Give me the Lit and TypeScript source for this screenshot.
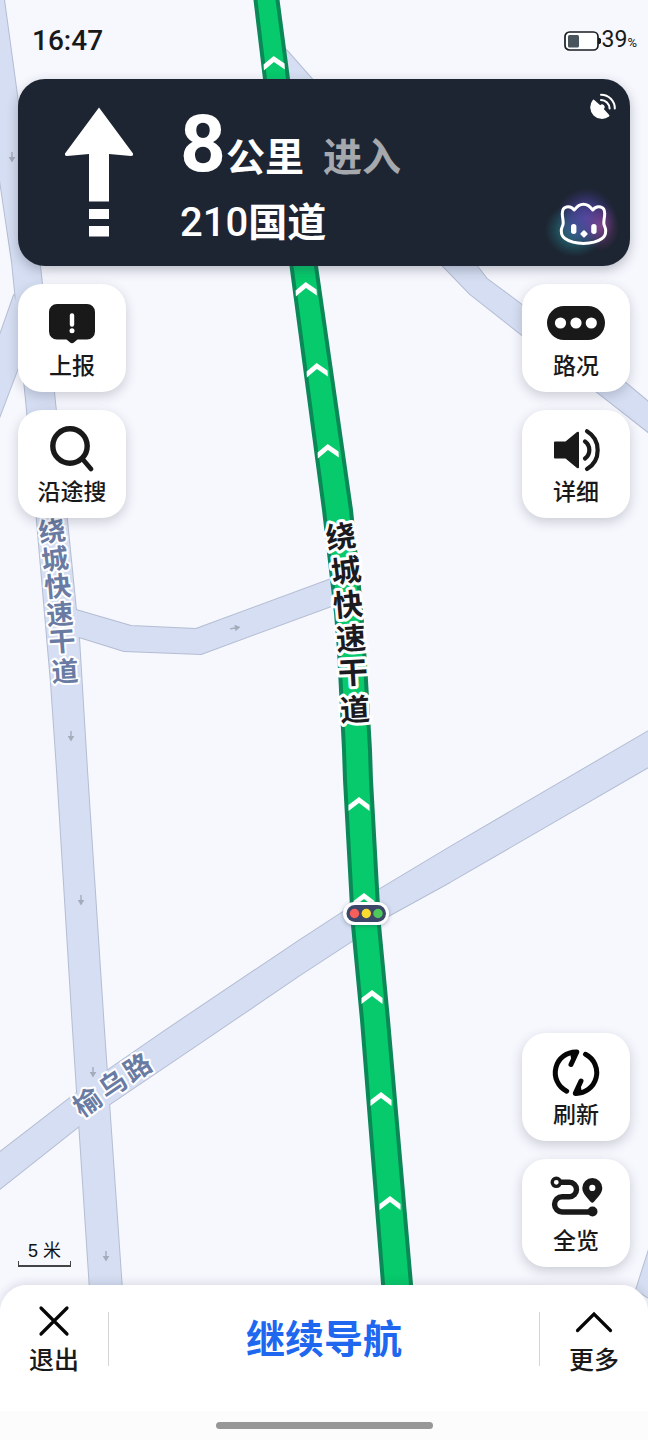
import { LitElement, html, svg, css } from "lit";
import { customElement, property } from "lit/decorators.js";

type Glyph = [char: string, x: number, y: number, angle: number];

const ROADS = [
  "M-6 -4 L3.500 -4 L17 95 L40 266 L54 392 L66 510 L76 610 L79 638 L87 770 L104 1030 L122 1290 L90 1290 L73 1030 L57 770 L51 683 L36 510 L26 400 L12 262 L-6 140 Z",
  "M14 295 L-4 346 L-4 426 L18 368 L30 340 Z",
  "M70 608 L76 610 L131 626 L196 629 L345 574 L345 601 L201 654 L124 651 L79 637 L70 635 Z",
  "M-4 1155 L70 1098 L108 1070 L166 1030 L300 940 L343 912 L380 889 L450 847 L652 729 L652 765 L450 882 L390 915 L352 941 L300 975 L200 1043 L110 1104 L78 1127 L-4 1192 Z",
  "M270 34 L288 52 L311 78 L477 266 L487 279 L522 305 L627 384 L652 405 L652 435 L597 392 L522 335 L470 294 L443 266 L262 60 Z",
  "M652 1240 L636 1290 L652 1300 Z",
];

const ROUTE =
  "M255 -4 L265 79 L291.500 266 L324 510 L336 613 L339 650 L344 750 L345 780 L353 925 L362 1020 L383.500 1290 L411.500 1290 L388 1020 L379 925 L371 780 L370 750 L365 663 L360 597 L351 510 L316 266 L288 79 L277 -4 Z";

const CHEVRONS = [
  [274, 63, -3], [306, 289, -3], [317, 370, -3], [328, 451, -3], [359, 804, 0],
  [364, 900, 0], [372, 997, 0], [381, 1099, 0], [390, 1203, 0],
];

const LANE_ARROWS = [
  [12, 157, 0], [71, 736, 0], [81, 900, 0], [93, 1072, 0], [106, 1256, 0], [235, 628, -100],
];

const MAIN_LABEL: Glyph[] = [
  ["绕", 341, 537, -8], ["城", 346, 571, -7], ["快", 348, 605, -5],
  ["速", 351, 639, -4], ["干", 353, 673, -3], ["道", 355, 710, -3],
];
const SIDE_LABEL: Glyph[] = [
  ["绕", 52, 532, -8], ["城", 55, 560, -7], ["快", 58, 587, -5],
  ["速", 60, 615, -5], ["干", 62, 642, -4], ["道", 65, 672, -3],
];
const CROSS_LABEL: Glyph[] = [
  ["榆", 88, 1103, -35], ["乌", 113, 1085, -34], ["路", 138, 1068, -33],
];

@customElement("nav-map")
class NavMap extends LitElement {
  static styles = css`
    :host { display: block; background: #f7f8fe; }
    .canvas { display: block; width: 100%; height: 100%; }
    .edge { fill: none; stroke: #b4bdd2; stroke-width: 2; stroke-linejoin: round; }
    .road { fill: #d5def2; }
    .route { fill: #06ca6b; stroke: #0b8857; stroke-width: 4; }
    .chevron { fill: #fff; }
    .lane { fill: #a4abbb; }
    .label {
      font-family: Roboto, "Noto Sans CJK SC", sans-serif;
      text-anchor: middle; dominant-baseline: central;
      font-weight: 700; paint-order: stroke; stroke: #fff; stroke-linejoin: round;
    }
    .main { font-size: 30px; fill: #1b1b1f; stroke-width: 6px; }
    .side { font-size: 27px; fill: #6a7ba3; stroke-width: 4px; }
    .lamp { filter: drop-shadow(0 1px 2px rgba(40, 50, 80, 0.35)); }
  `;

  private label(glyphs: Glyph[], kind: string) {
    return glyphs.map(
      ([c, x, y, a]) => svg`<text class="label ${kind}" transform="translate(${x} ${y}) rotate(${a})">${c}</text>`
    );
  }

  render() {
    return html`
      <svg class="canvas" viewBox="0 0 648 1440" preserveAspectRatio="xMidYMid slice" role="img" aria-label="地图">
        ${ROADS.map((d) => svg`<path class="edge" d=${d}></path>`)}
        ${ROADS.map((d) => svg`<path class="road" d=${d}></path>`)}
        ${LANE_ARROWS.map(
          ([x, y, a]) => svg`<path class="lane" transform="translate(${x} ${y}) rotate(${a})"
            d="M-.7 -5 H.7 V0 H3.300 L0 5.500 L-3.300 0 H-.7 Z"></path>`
        )}
        <path class="route" d=${ROUTE}></path>
        ${CHEVRONS.map(
          ([x, y, a]) => svg`<path class="chevron" transform="translate(${x} ${y}) rotate(${a})"
            d="M-10.500 1 L0 -7 L10.500 1 V7 L0 -1 L-10.500 7 Z"></path>`
        )}
        ${this.label(SIDE_LABEL, "side")}
        ${this.label(CROSS_LABEL, "side")}
        ${this.label(MAIN_LABEL, "main")}
        <g class="lamp">
          <rect x="343" y="902" width="46" height="23" rx="11.500" fill="#fff"></rect>
          <rect x="346.500" y="905" width="39.500" height="17" rx="8.500" fill="#3c4668"></rect>
          <circle cx="354.500" cy="913.500" r="4.700" fill="#f45f5c"></circle>
          <circle cx="366.300" cy="913.500" r="4.700" fill="#fbdb30"></circle>
          <circle cx="378" cy="913.500" r="4.700" fill="#4fc85b"></circle>
        </g>
      </svg>
    `;
  }
}

const ICONS: Record<string, unknown> = {
  report: svg`
    <path fill="#191919" d="M15 5 H45 A8 8 0 0 1 53 13 V32.500 A8 8 0 0 1 45 40.500 H35.500 L32.200 43.300 Q30 45 27.800 43.300 L24.500 40.500 H15 A8 8 0 0 1 7 32.500 V13 A8 8 0 0 1 15 5 Z"></path>
    <path d="M30 16.500 V25.500" stroke="#fff" stroke-width="4.400" stroke-linecap="round"></path>
    <circle cx="30" cy="31.700" r="2.500" fill="#fff"></circle>`,
  search: svg`
    <g fill="none" stroke="#191919" stroke-width="5.400" stroke-linecap="round">
      <circle cx="28" cy="21" r="17.200"></circle>
      <path d="M40.500 34 L49 44" stroke-width="4.800"></path>
    </g>`,
  traffic: svg`
    <rect x="1" y="7" width="58" height="34" rx="17" fill="#191919"></rect>
    <g fill="#fff">
      <circle cx="14.500" cy="24" r="5.600"></circle>
      <circle cx="30" cy="24" r="5.600"></circle>
      <circle cx="45.300" cy="24" r="5.600"></circle>
    </g>`,
  sound: svg`
    <path fill="#191919" d="M9 16.500 H19.500 L31 7 Q33 6 33 8 V42 Q33 44 31 43 L19.500 33.500 H9 Q8 33.500 8 32.500 V17.500 Q8 16.500 9 16.500 Z"></path>
    <g fill="none" stroke="#191919" stroke-width="4.200" stroke-linecap="round">
      <path d="M39 16.500 A10.500 10.500 0 0 1 39 33.500"></path>
      <path d="M41 6.300 A22 22 0 0 1 41 44"></path>
    </g>`,
  refresh: svg`
    <g fill="none" stroke="#060606" stroke-width="5" stroke-linecap="round" stroke-linejoin="round">
      <path d="M20.700 43.200 A20.700 20.700 0 0 1 30.800 4 L25 16.500"></path>
      <path d="M39.500 6.300 A20.700 20.700 0 0 1 29.300 45.400 L35 33"></path>
    </g>
    <path fill="#060606" d="M24 5 L32 3 L26 15 Z M36 44.500 L28 46.500 L34 34.500 Z"></path>`,
  overview: svg`
    <g fill="none" stroke="#191919">
      <circle cx="10.300" cy="8.300" r="4.100" stroke-width="3.400"></circle>
      <path d="M14 8.300 H23.300 A7.200 7.200 0 0 1 23.300 22.700 H16.200 A7.600 7.600 0 0 0 16.200 38 H46" stroke-width="5.400"></path>
    </g>
    <circle cx="46.500" cy="37.500" r="5" fill="#191919"></circle>
    <path fill="#191919" fill-rule="evenodd" d="M46.300 4 A10 10 0 0 1 56.300 14 C56.300 20 50 25 48 27.800 Q46.300 29.500 44.600 27.800 C42.600 25 36.300 20 36.300 14 A10 10 0 0 1 46.300 4 Z M46.300 10.800 A3.100 3.100 0 1 0 46.300 17 A3.100 3.100 0 1 0 46.300 10.800 Z"></path>`,
};

@customElement("map-button")
class MapButton extends LitElement {
  @property() icon = "";
  @property() label = "";

  static styles = css`
    :host { display: block; }
    .card {
      display: flex; flex-direction: column; align-items: center; gap: 5px;
      width: 108px; height: 108px; padding: 15px 0 0; border: 0;
      border-radius: 24px; background: #fff; color: #191919;
      box-shadow: 0 4px 12px rgba(40, 45, 65, 0.22);
      font: 500 23px/30px Roboto, "Noto Sans CJK SC", sans-serif;
      cursor: pointer;
    }
    .icon { display: block; width: 60px; height: 48px; }
  `;

  render() {
    return html`
      <button class="card" type="button">
        <svg class="icon" viewBox="0 0 60 48" aria-hidden="true">${ICONS[this.icon]}</svg>
        <span>${this.label}</span>
      </button>
    `;
  }
}

@customElement("app-root")
class AppRoot extends LitElement {
  static styles = css`
    :host {
      display: flex; flex-direction: column; position: relative; isolation: isolate;
      min-height: 100vh; overflow: hidden; color: #191919;
      font-family: Roboto, "Noto Sans CJK SC", sans-serif;
    }
    .map { position: absolute; inset: 0; z-index: -1; }
    .status {
      display: flex; align-items: center; justify-content: space-between;
      height: 79px; padding: 2px 11px 0 32px; box-sizing: border-box;
    }
    .clock { font-size: 28px; font-weight: 500; }
    .battery { display: flex; align-items: center; }
    .cell { width: 38px; height: 22px; }
    .level { font-size: 23px; line-height: 30px; padding-top: 2px; }
    .percent { font-size: 13px; }

    .banner {
      display: grid; grid-template-columns: 162px 1fr auto;
      height: 187px; margin: 0 18px; border-radius: 27px;
      background: #1e2532; color: #fff;
      box-shadow: 0 4px 12px rgba(40, 45, 65, 0.3);
    }
    .arrow { width: 70px; height: 132px; margin: 28px 0 0 46px; }
    .distance { margin: 21px 0 0; font-size: 39px; font-weight: 700; line-height: 88px; white-space: nowrap; }
    .number { font-size: 80px; }
    .enter { margin-left: 19px; color: #a5a8ad; }
    .street { margin: 0; font-size: 39px; font-weight: 700; line-height: 42px; }
    .route-number { font-size: 40px; font-weight: 500; }
    .tools {
      display: flex; flex-direction: column; align-items: flex-end;
      justify-content: space-between; padding: 13px 13px 20px 0;
    }
    .signal { width: 28px; height: 28px; }
    .assistant { padding: 0; margin-right: 9px; border: 0; background: none; cursor: pointer; }
    .face { display: block; width: 48px; height: 44px; overflow: visible; }

    .row { display: flex; justify-content: space-between; padding: 18px 18px 0; }
    .stack { display: grid; gap: 18px; }
    .lower { align-items: flex-end; margin-top: auto; padding: 18px; }
    .scale {
      width: 53px; color: #111; text-align: center; font-size: 18px; line-height: 22px;
      font-family: "Liberation Sans", "Noto Sans CJK SC", sans-serif;
    }
    .ruler { height: 4px; margin-top: -1px; border: solid #444; border-width: 0 1px 2px; }

    .sheet {
      border-radius: 27px 27px 0 0; background: #fff; overflow: hidden;
    }
    .shade { border-radius: 27px 27px 0 0; box-shadow: 0 -2px 10px rgba(40, 45, 65, 0.14); }
    .actions {
      display: grid; grid-template-columns: 108px 1px 1fr 1px 108px; align-items: center;
      height: 108px; padding-bottom: 18px;
    }
    .side {
      display: flex; flex-direction: column; align-items: center; gap: 7px;
      padding: 0; border: 0; background: none; color: #191919; cursor: pointer;
      font: 500 25px/30px Roboto, "Noto Sans CJK SC", sans-serif;
    }
    .glyph { width: 40px; height: 36px; }
    .rule { height: 54px; background: #d4d4d6; }
    .resume {
      padding: 2px 0 0; border: 0; background: none; color: #2067f0; cursor: pointer;
      font: 700 39px/60px Roboto, "Noto Sans CJK SC", sans-serif;
    }
    .home { display: flex; align-items: center; justify-content: center; height: 29px; background: #fcfcfc; }
    .pill { width: 217px; height: 7px; border-radius: 4px; background: #979797; }
  `;

  render() {
    return html`
      <nav-map class="map"></nav-map>

      <header class="status">
        <span class="clock">16:47</span>
        <span class="battery">
          <svg class="cell" viewBox="0 0 38 22" aria-hidden="true">
            <rect x="1" y="2" width="33" height="18" rx="4.500" fill="#fff" stroke="#191d22" stroke-width="1.700"></rect>
            <rect x="4" y="5" width="11" height="12.500" rx="1.500" fill="#4a545c"></rect>
            <path d="M34.500 8 L36.500 9 V13 L34.500 14 Z" fill="#191d22" stroke="#191d22"></path>
          </svg>
          <span class="level">39<span class="percent">%</span></span>
        </span>
      </header>

      <section class="banner">
        <svg class="arrow" viewBox="0 0 70 132" aria-label="直行" fill="#fff">
          <path d="M35 0.500 L69 46.500 Q69.500 49 67 49 L45 47 V94.500 H25 V47 L3 49 Q0.500 49 1 46.500 Z"></path>
          <rect x="25" y="102" width="20" height="10"></rect>
          <rect x="25" y="119" width="20" height="10.500"></rect>
        </svg>
        <div>
          <p class="distance"><span class="number">8</span>公里<span class="enter">进入</span></p>
          <p class="street"><span class="route-number">210</span>国道</p>
        </div>
        <div class="tools">
          <svg class="signal" viewBox="0 0 28 28" aria-label="卫星信号">
            <path d="M3.800 8 Q4.500 7.200 5.300 8 L11.200 13.200 A2.500 2.500 0 1 1 14.800 17 L20 22.800 Q20.800 23.700 20 24.400 A11.600 11.600 0 0 1 3.800 8 Z" fill="#fff"></path>
            <g fill="none" stroke="#fff" stroke-width="2" stroke-linecap="round">
              <path d="M12 7.900 A8.800 8.800 0 0 1 20.600 16.500"></path>
              <path d="M12 2.800 A13.600 13.600 0 0 1 25.800 16.500"></path>
            </g>
          </svg>
          <button class="assistant" type="button" aria-label="语音助手">
            <svg class="face" viewBox="0 0 48 44" aria-hidden="true">
              <defs>
                <radialGradient id="violet"><stop offset="0" stop-color="#5a46a8" stop-opacity=".9"></stop><stop offset=".5" stop-color="#4c409c" stop-opacity=".65"></stop><stop offset="1" stop-color="#3a3580" stop-opacity="0"></stop></radialGradient>
                <radialGradient id="teal"><stop offset="0" stop-color="#2fa5a8" stop-opacity=".75"></stop><stop offset=".5" stop-color="#278f9a" stop-opacity=".45"></stop><stop offset="1" stop-color="#1f7a88" stop-opacity="0"></stop></radialGradient>
                <radialGradient id="pink"><stop offset="0" stop-color="#b04a9a" stop-opacity=".6"></stop><stop offset="1" stop-color="#8a3a90" stop-opacity="0"></stop></radialGradient>
              </defs>
              <ellipse cx="15" cy="28" rx="30" ry="27" fill="url(#teal)"></ellipse>
              <ellipse cx="26" cy="16" rx="30" ry="30" fill="url(#violet)"></ellipse>
              <ellipse cx="41" cy="25" rx="18" ry="24" fill="url(#pink)"></ellipse>
              <path fill="none" stroke="#fff" stroke-width="3" stroke-linejoin="round"
                d="M14.300 8 C12 5 9 4.500 6.500 5 C3.300 5.700 2.300 8.200 2.300 11.500 C2.300 15 3.300 18 3.200 21.300 C3 24 1.300 25.500 1.300 28.700 C1.300 32.500 2.500 34.800 5 36.500 C14 43 33 43 42 36.500 C44.500 34.800 45.700 32.500 45.700 28.700 C45.700 25.500 44 24 43.800 21.300 C43.700 18 44.700 15 44.700 11.500 C44.700 8.200 43.700 5.700 40.500 5 C38 4.500 35 5 32.700 8 C30 4.200 27.300 2.200 23.500 2.200 C19.700 2.200 17 4.200 14.300 8 Z"></path>
              <rect x="11" y="22" width="5.400" height="10" rx="2.700" fill="#fff"></rect>
              <rect x="31.200" y="22" width="5.400" height="10" rx="2.700" fill="#fff"></rect>
              <path d="M24 29.300 L26.700 31.900 L24 34.500 L21.300 31.900 Z" fill="#fff" stroke="#fff" stroke-width="2" stroke-linejoin="round"></path>
            </svg>
          </button>
        </div>
      </section>

      <div class="row">
        <div class="stack">
          <map-button icon="report" label="上报"></map-button>
          <map-button icon="search" label="沿途搜"></map-button>
        </div>
        <div class="stack">
          <map-button icon="traffic" label="路况"></map-button>
          <map-button icon="sound" label="详细"></map-button>
        </div>
      </div>

      <div class="row lower">
        <div class="scale">5 米<div class="ruler"></div></div>
        <div class="stack">
          <map-button icon="refresh" label="刷新"></map-button>
          <map-button icon="overview" label="全览"></map-button>
        </div>
      </div>

      <footer class="shade">
        <div class="sheet">
          <div class="actions">
            <button class="side" type="button">
              <svg class="glyph" viewBox="0 0 40 36" fill="none" stroke="#060606" stroke-width="3.200" stroke-linecap="round" aria-hidden="true">
                <path d="M7 5 L33 31 M33 5 L7 31"></path>
              </svg>
              <span>退出</span>
            </button>
            <span class="rule"></span>
            <button class="resume" type="button">继续导航</button>
            <span class="rule"></span>
            <button class="side" type="button">
              <svg class="glyph" viewBox="0 0 40 36" fill="none" stroke="#060606" stroke-width="3.200" stroke-linecap="round" stroke-linejoin="miter" aria-hidden="true">
                <path d="M3.500 27.500 L20 11 L36.500 27.500"></path>
              </svg>
              <span>更多</span>
            </button>
          </div>
          <div class="home"><span class="pill"></span></div>
        </div>
      </footer>
    `;
  }
}
